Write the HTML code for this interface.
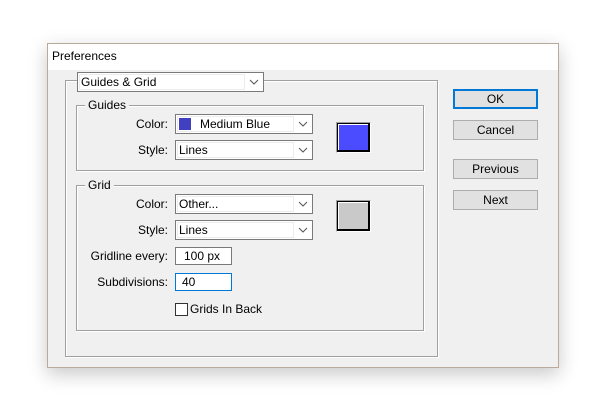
<!DOCTYPE html>
<html><head><style>
*{box-sizing:border-box;margin:0;padding:0}
body{width:600px;height:414px;background:#fff;position:relative;overflow:hidden;font-family:"Liberation Sans",Tahoma,sans-serif;font-size:12px;color:#000}
.a{position:absolute}
#dlg{left:47px;top:43px;width:512px;height:325px;background:#f0f0f0;border:1px solid #b9aa9c;box-shadow:0 6px 18px rgba(0,0,0,.22)}
#title{left:0;top:0;width:510px;height:26px;background:#fff;padding:5px 0 0 4px;font-size:12px}
.grp{border:1px solid #a0a0a0;box-shadow:1px 1px 0 #fff, inset 1px 1px 0 #fff}
.lbl{background:#f0f0f0;padding:0 3px;line-height:14px}
.dd{background:#fff;border:1px solid #7a7a7a;height:20px;line-height:18px;padding-left:3px}
.dd .in{position:absolute;left:1px;top:1px;bottom:1px;right:18px;border:1px solid #ececec}
.dd svg{position:absolute;right:4px;top:6px}
.dd span{position:relative}
.r{text-align:right;width:100px;line-height:14px}
.btn{width:85px;height:20px;background:#e1e1e1;border:1px solid #adadad;text-align:center;line-height:18px}
.tb{background:#fff;border:1px solid #7a7a7a;height:18px;line-height:16px;padding-left:8px}
</style></head><body>
<div id="dlg" class="a">
<div id="title" class="a">Preferences</div>
</div>
<div class="a grp" style="left:65px;top:80px;width:373px;height:277px"></div>
<div class="a dd" style="left:77px;top:72px;width:187px;"><div class="in"></div><span>Guides &amp; Grid</span><svg width="10" height="6"><path d="M1 1l4 4 4-4" stroke="#555" fill="none"/></svg></div>

<div class="a grp" style="left:76px;top:105px;width:348px;height:66px"></div>
<div class="a lbl" style="left:85px;top:98px">Guides</div>
<div class="a r" style="left:68px;top:117px">Color:</div>
<div class="a dd" style="left:175px;top:114px;width:138px"><div class="in"></div><span style="display:inline-block;width:12px;height:12px;background:#4040c0;vertical-align:-2px;margin-right:9px"></span><span>Medium Blue</span><svg width="10" height="6"><path d="M1 1l4 4 4-4" stroke="#555" fill="none"/></svg></div>
<div class="a r" style="left:68px;top:143px">Style:</div>
<div class="a dd" style="left:175px;top:140px;width:138px"><div class="in"></div><span>Lines</span><svg width="10" height="6"><path d="M1 1l4 4 4-4" stroke="#555" fill="none"/></svg></div>
<div class="a" style="left:336px;top:122px;width:35px;height:31px;border:1px solid #a0a0a0;border-right-color:#fff;border-bottom-color:#fff"><div style="width:100%;height:100%;border:2px solid #000;border-top-width:1px;border-left-width:1px;background:#4b4bff;box-shadow:inset 1px 1px 0 #fff"></div></div>

<div class="a grp" style="left:76px;top:185px;width:348px;height:146px"></div>
<div class="a lbl" style="left:85px;top:178px">Grid</div>
<div class="a r" style="left:68px;top:197px">Color:</div>
<div class="a dd" style="left:175px;top:194px;width:138px"><div class="in"></div><span>Other...</span><svg width="10" height="6"><path d="M1 1l4 4 4-4" stroke="#555" fill="none"/></svg></div>
<div class="a r" style="left:68px;top:223px">Style:</div>
<div class="a dd" style="left:175px;top:220px;width:138px"><div class="in"></div><span>Lines</span><svg width="10" height="6"><path d="M1 1l4 4 4-4" stroke="#555" fill="none"/></svg></div>
<div class="a" style="left:336px;top:200px;width:35px;height:32px;border:1px solid #a0a0a0;border-right-color:#fff;border-bottom-color:#fff"><div style="width:100%;height:100%;border:2px solid #000;border-top-width:1px;border-left-width:1px;background:#c9c9c9;box-shadow:inset 1px 1px 0 #fff"></div></div>
<div class="a r" style="left:68px;top:249px">Gridline every:</div>
<div class="a tb" style="left:175px;top:247px;width:57px">100 px</div>
<div class="a r" style="left:68px;top:275px">Subdivisions:</div>
<div class="a tb" style="left:175px;top:273px;width:57px;border-color:#0078d7;padding-left:6px">40</div>
<div class="a" style="left:175px;top:303px;width:13px;height:13px;border:1px solid #333;background:#fff"></div>
<div class="a" style="left:190px;top:302px;line-height:14px">Grids In Back</div>

<div class="a btn" style="left:453px;top:89px;border:2px solid #0078d7;line-height:16px">OK</div>
<div class="a btn" style="left:453px;top:120px">Cancel</div>
<div class="a btn" style="left:453px;top:159px">Previous</div>
<div class="a btn" style="left:453px;top:190px">Next</div>
</body></html>
